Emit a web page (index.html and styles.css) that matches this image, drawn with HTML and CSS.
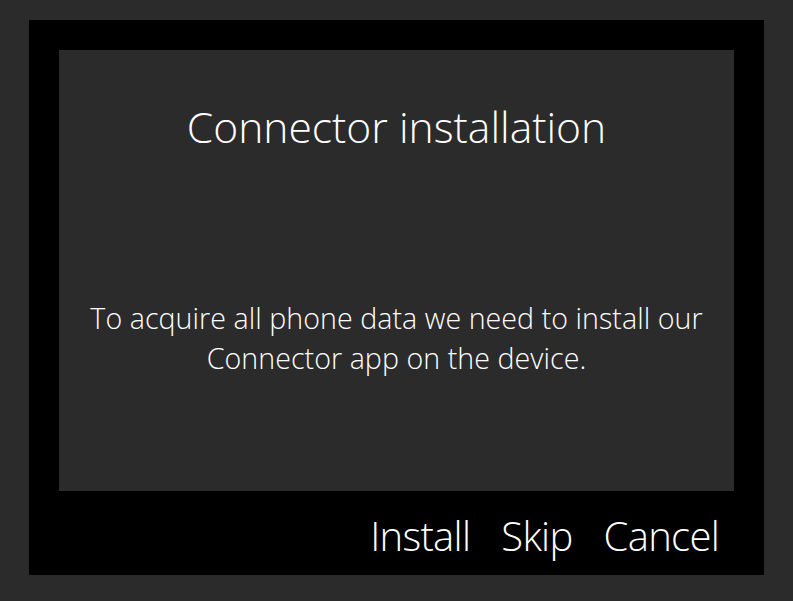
FILE: index.html
```html
<!DOCTYPE html>
<html lang="en">
<head>
    <meta charset="UTF-8">
    <title>Connector installation</title>
    <link rel="stylesheet" href="styles.css">
</head>
<body>

<div class="dialog">
    <div class="panel">
        <h1 class="title">Connector installation</h1>
        <p class="message">To acquire all phone data we need to install our<br>Connector app on the device.</p>
    </div>
    <div class="actions">
        <button class="btn">Install</button>
        <button class="btn">Skip</button>
        <button class="btn">Cancel</button>
    </div>
</div>

</body>
</html>
```

FILE: styles.css
```css
html, body { margin: 0; padding: 0; }
body { background: #2b2b2b; font-family: "Open Sans", "Segoe UI", sans-serif; font-weight: 300; color: #fff; }
.dialog { width: 735px; height: 555px; margin: 20px 0 0 29px; background: #000; padding: 30px 30px 0; box-sizing: border-box; }
.panel { height: 441px; background: #2b2b2b; padding-top: 48px; box-sizing: border-box; text-align: center; }
.title { margin: 0; font-size: 42.6px; line-height: 56px; font-weight: 300; }
.message { margin: 144px 0 0; font-size: 28.6px; line-height: 40px; letter-spacing: 0.05px; }
.actions { display: flex; justify-content: flex-end; gap: 31px; padding: 17px 15px 0 0; }
.btn { background: none; border: none; padding: 0; color: #fff; font-family: inherit; font-weight: 300; font-size: 40px; line-height: 56px; letter-spacing: -0.7px; cursor: pointer; }
```
